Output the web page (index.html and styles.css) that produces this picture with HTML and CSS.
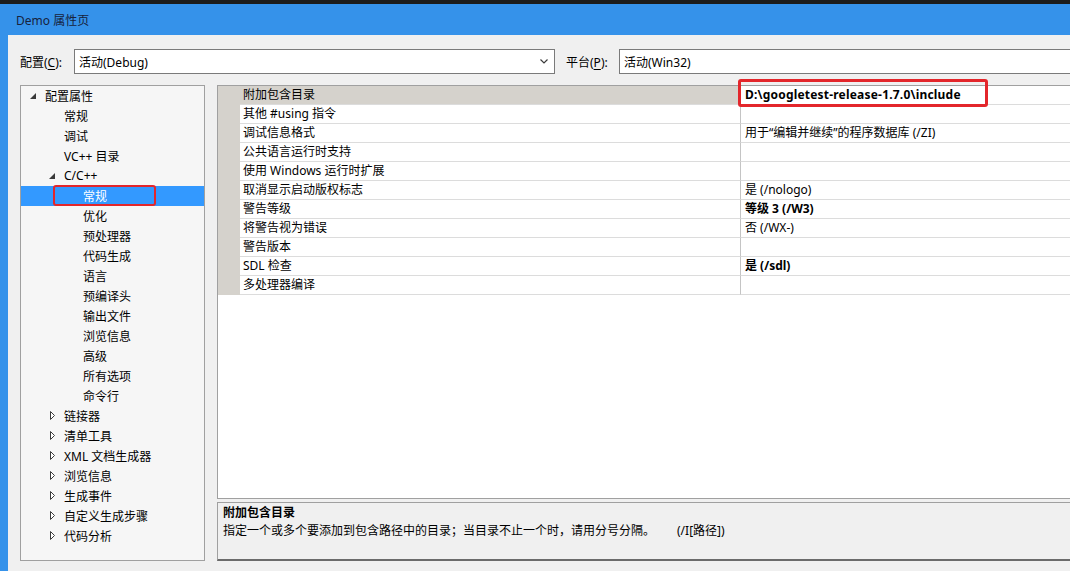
FILE: index.html
```html
<!DOCTYPE html>
<html lang="zh-CN">
<head>
<meta charset="utf-8">
<title>Demo 属性页</title>
<link rel="stylesheet" href="styles.css">
</head>
<body>
<div class="topstrip"></div>
<div class="titlebar">Demo 属性页</div>
<div class="frame">
  <div class="frame-edge"></div>
  <div class="client">
    <div class="config-row">
      <span class="lbl">配置(<u>C</u>):</span>
      <div class="combo combo-config">
        <span>活动(Debug)</span>
        <svg class="chev" width="8" height="5" viewBox="0 0 8 5"><polyline points="0.5,0.5 4,4 7.5,0.5" fill="none" stroke="#3c3c3c" stroke-width="1.2"/></svg>
      </div>
      <span class="lbl lbl-platform">平台(<u>P</u>):</span>
      <div class="combo combo-platform"><span>活动(Win32)</span></div>
    </div>
    <div class="panels">
      <div class="tree">
        <div class="tree-row l0"><span class="tg"><svg width="6" height="6" viewBox="0 0 6 6"><polygon points="6,0 6,6 0,6" fill="#3a3a3a"/></svg></span>配置属性</div>
        <div class="tree-row l1"><span class="tg"></span>常规</div>
        <div class="tree-row l1"><span class="tg"></span>调试</div>
        <div class="tree-row l1"><span class="tg"></span>VC++ 目录</div>
        <div class="tree-row l1"><span class="tg"><svg width="6" height="6" viewBox="0 0 6 6"><polygon points="6,0 6,6 0,6" fill="#3a3a3a"/></svg></span>C/C++</div>
        <div class="tree-row l2 sel"><span class="tg"></span>常规<span class="mark"></span></div>
        <div class="tree-row l2"><span class="tg"></span>优化</div>
        <div class="tree-row l2"><span class="tg"></span>预处理器</div>
        <div class="tree-row l2"><span class="tg"></span>代码生成</div>
        <div class="tree-row l2"><span class="tg"></span>语言</div>
        <div class="tree-row l2"><span class="tg"></span>预编译头</div>
        <div class="tree-row l2"><span class="tg"></span>输出文件</div>
        <div class="tree-row l2"><span class="tg"></span>浏览信息</div>
        <div class="tree-row l2"><span class="tg"></span>高级</div>
        <div class="tree-row l2"><span class="tg"></span>所有选项</div>
        <div class="tree-row l2"><span class="tg"></span>命令行</div>
        <div class="tree-row l1"><span class="tg"><svg class="col" width="5" height="9" viewBox="0 0 5 9"><polygon points="0.5,0.5 4.5,4.5 0.5,8.5" fill="#fff" stroke="#3a3a3a" stroke-width="1"/></svg></span>链接器</div>
        <div class="tree-row l1"><span class="tg"><svg class="col" width="5" height="9" viewBox="0 0 5 9"><polygon points="0.5,0.5 4.5,4.5 0.5,8.5" fill="#fff" stroke="#3a3a3a" stroke-width="1"/></svg></span>清单工具</div>
        <div class="tree-row l1"><span class="tg"><svg class="col" width="5" height="9" viewBox="0 0 5 9"><polygon points="0.5,0.5 4.5,4.5 0.5,8.5" fill="#fff" stroke="#3a3a3a" stroke-width="1"/></svg></span>XML 文档生成器</div>
        <div class="tree-row l1"><span class="tg"><svg class="col" width="5" height="9" viewBox="0 0 5 9"><polygon points="0.5,0.5 4.5,4.5 0.5,8.5" fill="#fff" stroke="#3a3a3a" stroke-width="1"/></svg></span>浏览信息</div>
        <div class="tree-row l1"><span class="tg"><svg class="col" width="5" height="9" viewBox="0 0 5 9"><polygon points="0.5,0.5 4.5,4.5 0.5,8.5" fill="#fff" stroke="#3a3a3a" stroke-width="1"/></svg></span>生成事件</div>
        <div class="tree-row l1"><span class="tg"><svg class="col" width="5" height="9" viewBox="0 0 5 9"><polygon points="0.5,0.5 4.5,4.5 0.5,8.5" fill="#fff" stroke="#3a3a3a" stroke-width="1"/></svg></span>自定义生成步骤</div>
        <div class="tree-row l1"><span class="tg"><svg class="col" width="5" height="9" viewBox="0 0 5 9"><polygon points="0.5,0.5 4.5,4.5 0.5,8.5" fill="#fff" stroke="#3a3a3a" stroke-width="1"/></svg></span>代码分析</div>
      </div>
      <div class="right">
        <div class="grid">
          <div class="prow psel"><div class="gut"></div><div class="pname">附加包含目录</div><div class="pval b"><span class="path">D:\googletest-release-1.7.0\include</span><span class="mark2"></span></div></div>
          <div class="prow"><div class="gut"></div><div class="pname">其他 #using 指令</div><div class="pval"></div></div>
          <div class="prow"><div class="gut"></div><div class="pname">调试信息格式</div><div class="pval">用于“编辑并继续”的程序数据库 (/ZI)</div></div>
          <div class="prow"><div class="gut"></div><div class="pname">公共语言运行时支持</div><div class="pval"></div></div>
          <div class="prow"><div class="gut"></div><div class="pname">使用 Windows 运行时扩展</div><div class="pval"></div></div>
          <div class="prow"><div class="gut"></div><div class="pname">取消显示启动版权标志</div><div class="pval">是 (/nologo)</div></div>
          <div class="prow"><div class="gut"></div><div class="pname">警告等级</div><div class="pval b">等级 3 (/W3)</div></div>
          <div class="prow"><div class="gut"></div><div class="pname">将警告视为错误</div><div class="pval">否 (/WX-)</div></div>
          <div class="prow"><div class="gut"></div><div class="pname">警告版本</div><div class="pval"></div></div>
          <div class="prow"><div class="gut"></div><div class="pname">SDL 检查</div><div class="pval b">是 (/sdl)</div></div>
          <div class="prow"><div class="gut"></div><div class="pname">多处理器编译</div><div class="pval"></div></div>
        </div>
        <div class="desc">
          <div class="desc-title">附加包含目录</div>
          <div class="desc-text">指定一个或多个要添加到包含路径中的目录；当目录不止一个时，请用分号分隔。<span class="switch">(/I[路径])</span></div>
        </div>
      </div>
    </div>
  </div>
</div>
</body>
</html>
```
FILE: styles.css
```css
* { box-sizing: border-box; }
html, body { margin: 0; padding: 0; }
body {
  width: 1070px;
  height: 571px;
  overflow: hidden;
  background: #3592ea;
  font-family: "Noto Sans", "Noto Sans CJK SC", sans-serif;
  font-size: 12px;
  color: #000;
}
.topstrip { height: 4px; background: #1c1c1c; }
.titlebar {
  height: 31px;
  display: flex;
  align-items: center;
  padding-left: 16px;
  background: #3592ea;
  color: #17233d;
}
.frame { display: flex; width: 1100px; height: 536px; }
.frame-edge { width: 8px; flex: none; background: #3592ea; }
.client { flex: 1; background: #f0f0f0; padding: 14px 12px 0 12px; }

.config-row { display: flex; align-items: center; height: 25px; }
.lbl { width: 54px; flex: none; white-space: nowrap; }
.lbl u { text-decoration-thickness: 1px; text-underline-offset: 2px; }
.combo {
  height: 25px;
  border: 1px solid #7a7a7a;
  background: #fff;
  display: flex;
  align-items: center;
  padding-left: 4px;
  white-space: nowrap;
}
.combo-config { width: 481px; flex: none; justify-content: space-between; padding-right: 6px; }
.chev { display: block; }
.lbl-platform { margin-left: 11px; width: 53px; }
.combo-platform { flex: 1; }

.panels { display: flex; gap: 12px; margin-top: 11px; height: 476px; }

.tree {
  width: 185px;
  flex: none;
  border: 1px solid #a0a0a0;
  background: #f6f6f6;
}
.tree-row {
  height: 20px;
  display: flex;
  align-items: center;
  position: relative;
  white-space: nowrap;
  padding-bottom: 1px;
}
.l0 { padding-left: 5px; }
.l1 { padding-left: 24px; }
.l2 { padding-left: 43px; }
.tg { width: 19px; height: 19px; flex: none; display: flex; align-items: center; padding-left: 4px; }
.tg svg { display: block; }
.tg .col { margin-left: 1px; }
.tree-row.sel { background: #3399ff; color: #fff; }
.mark {
  position: absolute;
  left: 32px;
  top: -1px;
  width: 103px;
  height: 21px;
  border: 2.5px solid #e3262b;
  border-radius: 3px;
}

.right { flex: 1; display: flex; flex-direction: column; gap: 3px; }
.grid {
  flex: 1;
  border: 1px solid #a0a0a0;
  border-right: none;
  background: #fff;
}
.prow { display: grid; grid-template-columns: 22px 501px 1fr; height: 19px; }
.gut { background: #d5d2cc; }
.pname {
  border-right: 1px solid #c4c4c4;
  border-bottom: 1px solid #dcdcdc;
  padding-left: 3px;
  line-height: 18px;
  white-space: nowrap;
}
.pval {
  border-bottom: 1px solid #dcdcdc;
  padding-left: 4px;
  line-height: 18px;
  white-space: nowrap;
  position: relative;
}
.psel .pname { background: #d5d2cc; }
.b { font-weight: bold; }
.path { letter-spacing: 0.2px; }
.mark2 {
  position: absolute;
  left: -3px;
  top: -7px;
  width: 250px;
  height: 28px;
  border: 3px solid #e3262b;
  border-radius: 3px;
}

.desc {
  height: 59px;
  flex: none;
  border: 1px solid #a0a0a0;
  border-bottom: 2px solid #6b6b6b;
  background: #f0f0f0;
  padding: 1px 0 0 5px;
  line-height: 18px;
}
.desc-title { font-weight: bold; }
.desc-text { white-space: nowrap; }
.switch { margin-left: 22px; }
```
